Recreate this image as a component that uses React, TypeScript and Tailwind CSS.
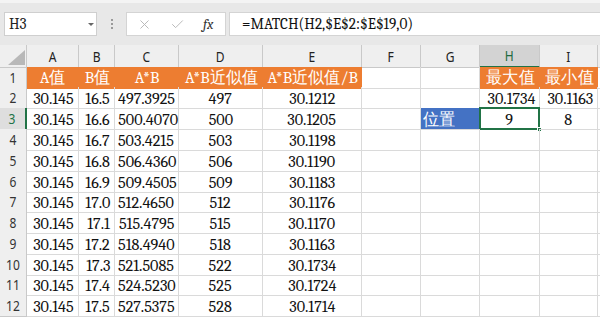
import React from "react";
import { X, Check } from "lucide-react";

const GRID =
  "grid grid-cols-[27px_52px_36px_64px_84px_99px_59px_59px_60px_58px_2px]";

type Align = "r" | "c" | "l";

function T({ children, a, s }: { children: React.ReactNode; a: Align; s?: boolean }) {
  const origin =
    a === "r" ? "origin-right" : a === "c" ? "origin-center" : "origin-left";
  const sc = s ? "scale-x-[0.95]" : "scale-x-[0.86]";
  return (
    <span className={`inline-block whitespace-nowrap ${sc} ${origin}`}>
      {children}
    </span>
  );
}

const serif = "font-serif";
const sans = "font-sans";

const rows: string[][] = [
  ["30.145", "16.5", "497.3925", "497", "30.1212", "", "", "30.1734", "30.1163"],
  ["30.145", "16.6", "500.4070", "500", "30.1205", "", "位置", "9", "8"],
  ["30.145", "16.7", "503.4215", "503", "30.1198", "", "", "", ""],
  ["30.145", "16.8", "506.4360", "506", "30.1190", "", "", "", ""],
  ["30.145", "16.9", "509.4505", "509", "30.1183", "", "", "", ""],
  ["30.145", "17.0", "512.4650", "512", "30.1176", "", "", "", ""],
  ["30.145", "17.1", "515.4795", "515", "30.1170", "", "", "", ""],
  ["30.145", "17.2", "518.4940", "518", "30.1163", "", "", "", ""],
  ["30.145", "17.3", "521.5085", "522", "30.1734", "", "", "", ""],
  ["30.145", "17.4", "524.5230", "525", "30.1724", "", "", "", ""],
  ["30.145", "17.5", "527.5375", "528", "30.1714", "", "", "", ""],
];

const aligns: Align[] = ["r", "r", "r", "c", "c", "l", "l", "r", "r"];

const headers = ["A值", "B值", "A*B", "A*B近似值", "A*B近似值/B", "", "", "最大值", "最小值"];

function RowHead({ n, active }: { n: number; active?: boolean }) {
  return (
    <div
      className={`flex items-center justify-center border-b border-r border-[#c9c9c9] ${sans} text-[14px] ${
        active
          ? "bg-[#dedede] text-[#217346] border-r-2 border-r-[#217346]"
          : "bg-[#efefef] text-[#333]"
      }`}
    >
      <T a="c">{n}</T>
    </div>
  );
}

export default function App() {
  const colLetters = ["A", "B", "C", "D", "E", "F", "G", "H", "I"];
  return (
    <div className="w-[600px] h-[319px] overflow-hidden bg-white">
      {/* formula bar */}
      <div className="h-[45px] bg-[#e8e8e8] border-t-[3px] border-t-[#f4f4f4] flex items-start pt-[9px] pl-[4px]">
        <div
          className={`relative w-[93px] h-[24px] bg-white border border-[#cfcfcf] flex items-center pl-[4px] text-[16px] text-[#222] ${serif}`}
        >
          <T a="l" s>H3</T>
          <span className="absolute left-[83px] top-[10px] w-0 h-0 border-l-[3px] border-r-[3px] border-t-[3px] border-l-transparent border-r-transparent border-t-[#666]" />
        </div>
        <div className="w-[29px] h-[24px] flex flex-col items-center justify-center gap-[2px]">
          <span className="w-[2px] h-[2px] bg-[#9a9a9a]" />
          <span className="w-[2px] h-[2px] bg-[#9a9a9a]" />
          <span className="w-[2px] h-[2px] bg-[#9a9a9a]" />
        </div>
        <div className="w-[100px] h-[24px] bg-white border border-[#d4d4d4] flex items-center">
          <X className="ml-[10px] w-[15px] h-[15px] text-[#b5b5b5]" strokeWidth={1.5} />
          <Check className="ml-[18px] w-[15px] h-[15px] text-[#b5b5b5]" strokeWidth={1.5} />
          <span className={`ml-[18px] italic text-[15px] text-[#333] ${serif}`}>
            <T a="l" s>fx</T>
          </span>
        </div>
        <div
          className={`ml-[3px] flex-1 h-[24px] bg-white border border-[#d4d4d4] border-r-0 flex items-center pl-[12px] text-[16px] text-[#111] ${serif}`}
        >
          <T a="l" s>=MATCH(H2,$E$2:$E$19,0)</T>
        </div>
      </div>

      {/* column headers */}
      <div className={`${GRID} h-[22px] bg-[#efefef]`}>
        <div className="relative border-r border-b border-[#c9c9c9]">
          <svg className="absolute left-[8px] top-[5px]" width="17" height="15" viewBox="0 0 17 15">
            <polygon points="17,0 17,15 0,15" fill="#b8b8b8" />
          </svg>
        </div>
        {colLetters.map((c) => (
          <div
            key={c}
            className={`flex items-center justify-center ${sans} text-[14px] ${
              c === "H"
                ? "bg-[#d3d3d3] text-[#1e6b40] border-r border-[#c9c9c9] border-b-2 border-b-[#217346]"
                : "text-[#222] border-r border-b border-[#c9c9c9]"
            }`}
          >
            <T a="c">{c}</T>
          </div>
        ))}
        <div className="border-b border-[#c9c9c9]" />
      </div>

      {/* row 1 */}
      <div className={`${GRID} h-[20px]`}>
        <RowHead n={1} />
        {headers.map((h, i) =>
          h ? (
            <div
              key={i}
              className={`bg-[#ed7d31] text-white text-[17px] leading-[18px] pt-[2px] text-center ${serif}`}
            >
              <T a="c" s>{h}</T>
            </div>
          ) : (
            <div key={i} className="border-r border-b border-[#dadada]" />
          )
        )}
        <div className="border-b border-[#dadada]" />
      </div>

      {/* data rows */}
      {rows.map((r, ri) => {
        const n = ri + 2;
        const h = ri === 4 || ri === 8 ? "h-[20px]" : "h-[21px]";
        return (
          <div key={n} className={`${GRID} ${h}`}>
            <RowHead n={n} active={n === 3} />
            {r.map((v, ci) => {
              const isBlue = n === 3 && ci === 6;
              const isSel = n === 3 && ci === 7;
              const a: Align = isBlue ? "l" : n === 3 && ci >= 7 ? "c" : aligns[ci];
              const alignCls =
                a === "r" ? "text-right pr-[4px]" : a === "c" ? "text-center" : "text-left pl-[2px]";
              return (
                <div
                  key={ci}
                  className={`relative text-[17px] leading-[18px] pt-[3px] ${serif} ${alignCls} ${
                    isBlue
                      ? "bg-[#4472c4] text-white border-b border-[#dadada]"
                      : "text-[#111] border-r border-b border-[#dadada]"
                  }`}
                >
                  {v && <T a={a} s>{v}</T>}
                  {isSel && (
                    <>
                      <span className="absolute left-[-1px] top-[-1px] right-[-1px] bottom-[-1px] border-2 border-[#217346]" />
                      <span className="absolute right-[-3px] bottom-[-3px] w-[5px] h-[5px] bg-[#217346] border border-white" />
                    </>
                  )}
                </div>
              );
            })}
            <div className="border-b border-[#dadada]" />
          </div>
        );
      })}
    </div>
  );
}
